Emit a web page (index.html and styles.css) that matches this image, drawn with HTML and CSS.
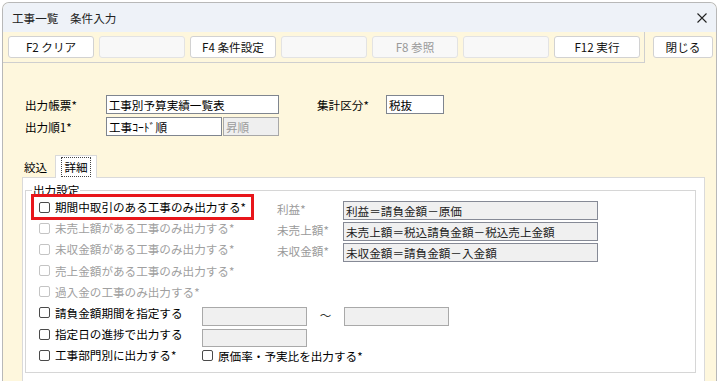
FILE: index.html
```html
<!DOCTYPE html>
<html lang="ja">
<head>
    <meta charset="UTF-8">
    <title>工事一覧 条件入力</title>
    <link rel="stylesheet" href="styles.css">
</head>
<body>

<div class="window">
    <div class="titlebar">
        <span class="title">工事一覧　条件入力</span>
        <svg class="close-x" width="10" height="10" viewBox="0 0 10 10"><path d="M0.5 0.5L9.5 9.5M9.5 0.5L0.5 9.5" stroke="#222" stroke-width="1.1" fill="none"/></svg>
    </div>

    <div class="toolbar">
        <div class="fkeys">
            <button class="fkey">F2 クリア</button>
            <button class="fkey blank"></button>
            <button class="fkey">F4 条件設定</button>
            <button class="fkey blank"></button>
            <button class="fkey blank" disabled>F8 参照</button>
            <button class="fkey blank"></button>
            <button class="fkey">F12 実行</button>
        </div>
        <button class="fkey close-btn">閉じる</button>
    </div>

    <div class="content">
        <div class="head-form">
            <div class="col">
                <div class="field">
                    <label>出力帳票*</label>
                    <input class="w-long" value="工事別予算実績一覧表">
                </div>
                <div class="field">
                    <label>出力順1*</label>
                    <input class="w-mid" value="工事ｺｰﾄﾞ順">
                    <input class="w-short ro" value="昇順" disabled>
                </div>
            </div>
            <div class="col col-right">
                <div class="field">
                    <label class="lbl-short">集計区分*</label>
                    <input class="w-tax" value="税抜">
                </div>
            </div>
        </div>

        <div class="tabs">
            <div class="tab">絞込</div>
            <div class="tab active"><span class="focus">詳細</span></div>
        </div>

        <div class="panel">
            <fieldset>
                <legend>出力設定</legend>
                <div class="rows">
                    <div class="row">
                        <div class="left"><span class="chk marked"><span class="box"></span>期間中取引のある工事のみ出力する*</span></div>
                        <span class="calc-label">利益*</span>
                        <input class="calc" value="利益＝請負金額－原価" disabled>
                    </div>
                    <div class="row">
                        <div class="left"><span class="chk off"><span class="box"></span>未売上額がある工事のみ出力する*</span></div>
                        <span class="calc-label">未売上額*</span>
                        <input class="calc" value="未売上額＝税込請負金額－税込売上金額" disabled>
                    </div>
                    <div class="row">
                        <div class="left"><span class="chk off"><span class="box"></span>未収金額がある工事のみ出力する*</span></div>
                        <span class="calc-label">未収金額*</span>
                        <input class="calc" value="未収金額＝請負金額－入金額" disabled>
                    </div>
                    <div class="row">
                        <span class="chk off"><span class="box"></span>売上金額がある工事のみ出力する*</span>
                    </div>
                    <div class="row">
                        <span class="chk off"><span class="box"></span>過入金の工事のみ出力する*</span>
                    </div>
                    <div class="row row-tall">
                        <div class="left-short"><span class="chk"><span class="box"></span>請負金額期間を指定する</span></div>
                        <input class="date" disabled>
                        <span class="tilde">～</span>
                        <input class="date" disabled>
                    </div>
                    <div class="row">
                        <div class="left-short"><span class="chk"><span class="box"></span>指定日の進捗で出力する</span></div>
                        <input class="date short-h" disabled>
                    </div>
                    <div class="row">
                        <div class="left-short"><span class="chk"><span class="box"></span>工事部門別に出力する*</span></div>
                        <span class="chk"><span class="box"></span>原価率・予実比を出力する*</span>
                    </div>
                </div>
            </fieldset>
        </div>
    </div>
</div>

</body>
</html>
```

FILE: styles.css
```css
html, body {
    margin: 0;
    padding: 0;
    background: #fff;
    overflow: hidden;
}

body {
    font-family: "Noto Sans CJK JP", "Noto Sans", sans-serif;
    font-size: 11.6px;
    line-height: 14px;
    color: #000;
}

.window {
    margin: 2px 4px 0 2px;
    height: 420px;
    border: 1px solid #b8b8b8;
    border-bottom: none;
    border-radius: 7px 7px 0 0;
    overflow: hidden;
    background: #fef7dd;
}

.titlebar {
    height: 29px;
    display: flex;
    align-items: center;
    justify-content: space-between;
    padding: 0 9px 0 9px;
    background: #eef2f8;
}

.title {
    color: #222;
}

.close-x {
    display: block;
}

/* function key bar */
.toolbar {
    display: flex;
    align-items: flex-start;
}

.fkeys {
    display: flex;
    gap: 5px;
    padding: 4px 4px 4px 5px;
    border-right: 1px solid #cfcfcf;
    border-bottom: 1px solid #cfcfcf;
}

.fkey {
    width: 86px;
    height: 22px;
    padding: 0;
    font-family: inherit;
    font-size: 11.6px;
    color: #111;
    background: #fff;
    border: 1px solid #d2d2d2;
    border-radius: 3px;
}

.fkey.blank {
    background: #f8f8f8;
    border-color: #e3e3e3;
}

.fkey:disabled {
    color: #9a9a9a;
}

.close-btn {
    width: 60px;
    margin: 4px 0 0 8px;
}

/* form */
.content {
    padding: 32px 11px 0 19px;
}

.head-form {
    display: flex;
    padding-left: 3px;
}

.col {
    width: 254px;
}

.col-right {
    margin-left: 38px;
}

.field {
    display: flex;
    align-items: center;
    height: 19px;
    margin-bottom: 3px;
}

.field label {
    width: 81px;
}

.field .lbl-short {
    width: 69px;
}

input {
    box-sizing: border-box;
    height: 19px;
    margin: 0;
    padding: 0 2px;
    font-family: inherit;
    font-size: 11.6px;
    color: #000;
    background: #fff;
    border: 1px solid #7f858f;
    outline: none;
}

.w-long { width: 174px; }
.w-mid { width: 116px; }
.w-tax { width: 58px; }

.w-short {
    width: 56px;
    margin-left: 1px;
}

.ro {
    background: #efefef;
    border-color: #a8a8a8;
    color: #9a9a9a;
}

/* tabs */
.tabs {
    display: flex;
    align-items: flex-end;
    height: 22px;
    margin: 16px 0 0 -2px;
}

.tab {
    width: 35px;
    height: 20px;
    padding-right: 4px;
    display: flex;
    align-items: center;
    justify-content: center;
    box-sizing: border-box;
}

.tab.active {
    position: relative;
    z-index: 1;
    width: 42px;
    height: 23px;
    padding: 0;
    margin-bottom: -1px;
    background: #fff;
    border: 1px solid #dadada;
    border-bottom: none;
}

.focus {
    padding: 2px 2px;
    outline: 1px dotted #444;
}

.panel {
    height: 240px;
    background: #fff;
    border: 1px solid #dadada;
}

fieldset {
    margin: 5px 8px 0 2px;
    padding: 0 0 6px 6px;
    border: 1px solid #d6d6d6;
}

legend {
    padding: 0 1px;
}

.rows {
    margin-left: 7px;
}

.row {
    display: flex;
    align-items: center;
    height: 21px;
}

.row-tall {
    height: 22px;
}

.left {
    width: 238px;
}

.left-short {
    width: 163px;
}

.chk {
    display: inline-flex;
    align-items: center;
    gap: 5px;
}

.box {
    width: 11px;
    height: 11px;
    box-sizing: border-box;
    border: 1px solid #4a4a4a;
    border-radius: 2px;
    background: #fff;
}

.chk.off {
    color: #a0a0a0;
}

.chk.off .box {
    border-color: #c4c4c4;
}

.marked {
    padding: 2px 4px;
    margin: -2px -4px;
    outline: 3px solid #e8161b;
    outline-offset: 1px;
}

.calc-label {
    width: 66px;
    margin-top: 2px;
    color: #9a9a9a;
}

.calc {
    width: 255px;
    margin-top: 6px;
    background: #f0f0f0;
    border-color: #868a96;
    color: #222;
}

.date {
    width: 105px;
    margin-top: 6px;
    background: #f0f0f0;
    border-color: #a9a9a9;
}

.date.short-h {
    height: 18px;
}

.tilde {
    width: 37px;
    margin-top: 4px;
    text-align: center;
    color: #333;
}
```
